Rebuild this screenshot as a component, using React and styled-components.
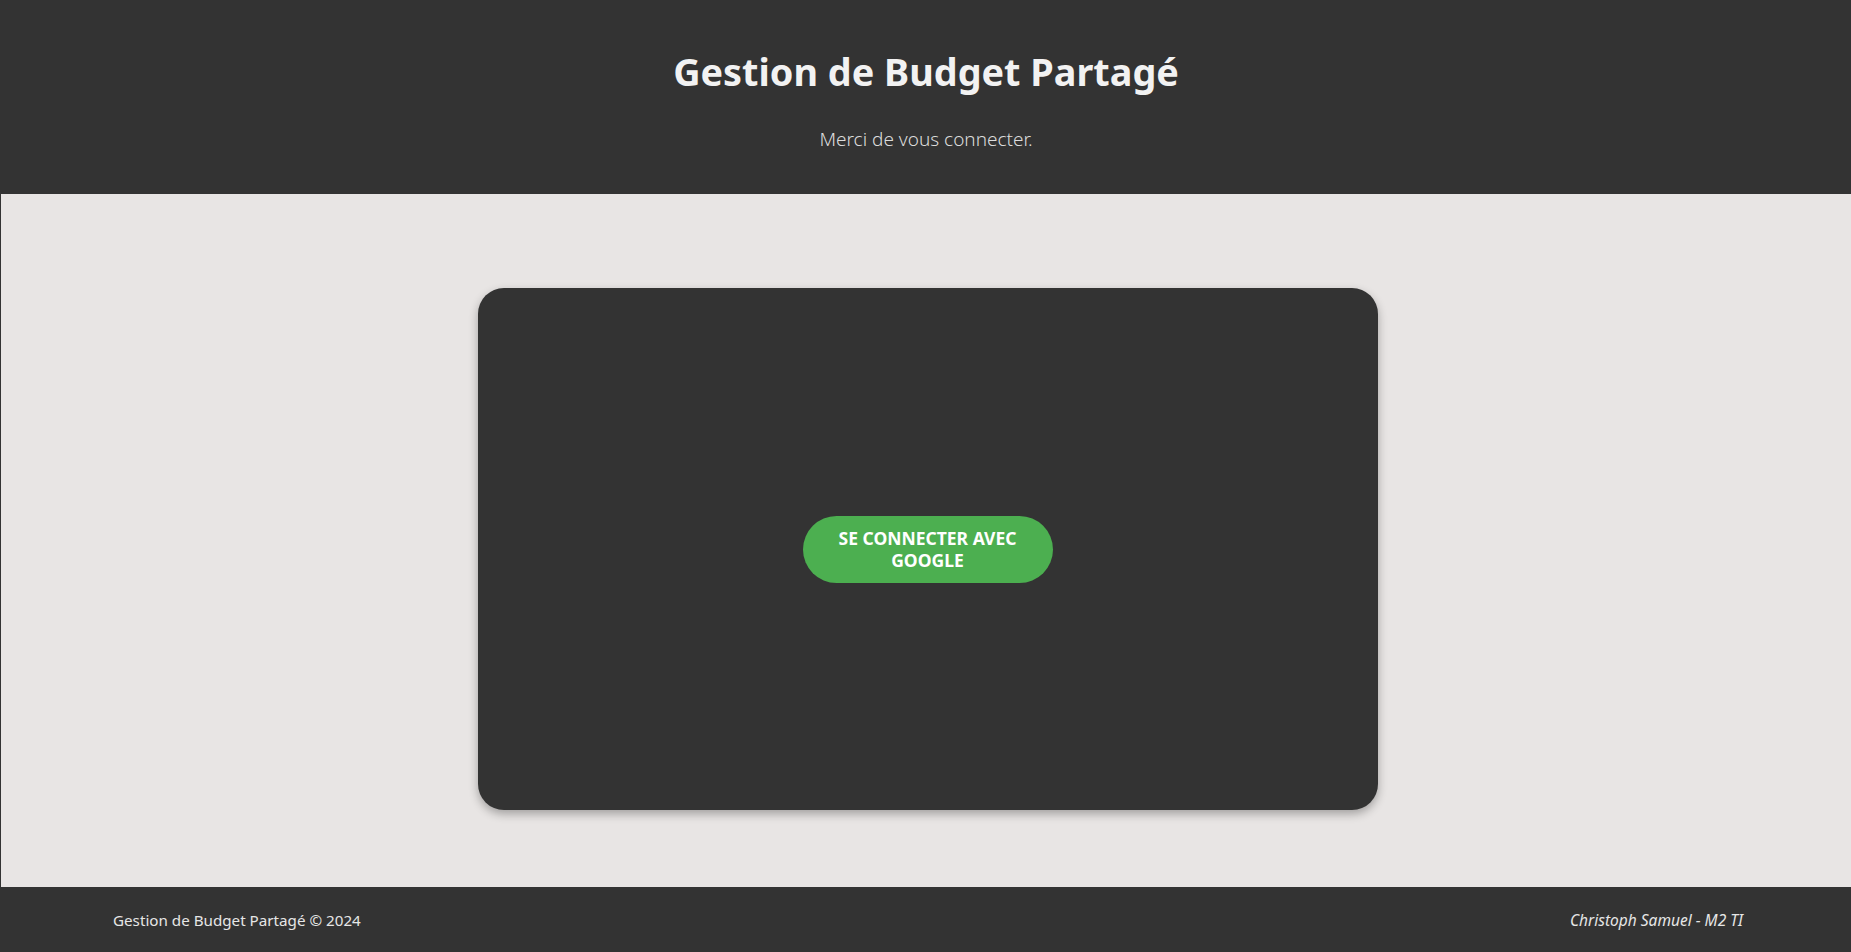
import React from "react";
import styled, { createGlobalStyle } from "styled-components";

const GlobalStyle = createGlobalStyle`
  html, body {
    margin: 0;
    padding: 0;
    background: #e8e5e4;
    font-family: "Noto Sans", "Open Sans", sans-serif;
  }
  * { box-sizing: border-box; }
`;

const Page = styled.div`
  min-height: 100vh;
  display: flex;
  flex-direction: column;
  border-left: 1px solid #333;
`;

const Header = styled.header`
  height: 194px;
  background: #333333;
  display: flex;
  flex-direction: column;
  align-items: center;
  color: #f2f2f2;
`;

const Title = styled.h1`
  margin: 48px 0 0;
  font-size: 37.8px;
  font-weight: 700;
  line-height: 48px;
`;

const Subtitle = styled.p`
  margin: 30px 0 0;
  font-size: 19px;
  font-weight: 300;
  color: #dcdcdc;
`;

const Main = styled.main`
  flex: 1;
  display: flex;
  justify-content: center;
  padding: 94px 0 0 3px;
`;

const Card = styled.section`
  width: 900px;
  height: 522px;
  background: #333333;
  border-radius: 26px;
  box-shadow: 0 4px 10px rgba(0, 0, 0, 0.3);
  display: flex;
  align-items: center;
  justify-content: center;
`;

const GoogleButton = styled.button`
  width: 250px;
  height: 67px;
  border: none;
  border-radius: 34px;
  background: #4caf50;
  color: #ffffff;
  font-family: inherit;
  font-size: 17.5px;
  font-weight: 700;
  line-height: 22px;
  text-transform: uppercase;
  padding: 0 24px;
  cursor: pointer;
`;

const Footer = styled.footer`
  height: 65px;
  background: #333333;
  color: #e6e6e6;
  display: flex;
  align-items: center;
  justify-content: space-between;
  padding: 0 108px 0 112px;
  font-size: 15.2px;
`;

const Signature = styled.span`
  font-style: italic;
  font-size: 15.5px;
`;

export default function App() {
  return (
    <>
      <GlobalStyle />
      <Page>
        <Header>
          <Title>Gestion de Budget Partagé</Title>
          <Subtitle>Merci de vous connecter.</Subtitle>
        </Header>
        <Main>
          <Card>
            <GoogleButton>Se connecter avec Google</GoogleButton>
          </Card>
        </Main>
        <Footer>
          <span>Gestion de Budget Partagé © 2024</span>
          <Signature>Christoph Samuel - M2 TI</Signature>
        </Footer>
      </Page>
    </>
  );
}
